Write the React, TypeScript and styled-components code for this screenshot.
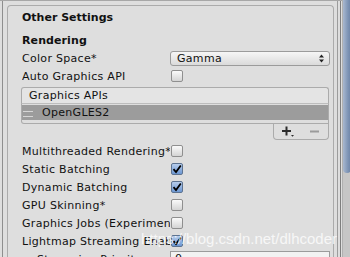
import React from 'react'
import styled, { createGlobalStyle } from 'styled-components'

const GlobalStyle = createGlobalStyle`
  html, body {
    margin: 0;
    padding: 0;
    background: #dedede;
    overflow: hidden;
  }
  body {
    font-family: 'DejaVu Sans', Verdana, sans-serif;
    font-size: 11px;
    letter-spacing: 0.3px;
    color: #111;
  }
`

const Window = styled.div`
  position: relative;
  display: flex;
  width: 350px;
  height: 257px;
  overflow: hidden;
  background: #dedede;
`

const Inspector = styled.div`
  display: flex;
  flex: 1;
  border-top: 1px solid #a7a7a7;
`

const LeftRail = styled.div`
  flex: none;
  width: 4px;
  margin-left: 2px;
  border-left: 1px solid #8e8e8e;
`

const RightRail = styled.div`
  flex: none;
  width: 2px;
  margin: 0 1px 0 3px;
  border-left: 1px solid #9c9c9c;
  border-right: 1px solid #7e7e7e;
`

const Box = styled.div`
  flex: none;
  box-sizing: border-box;
  width: 327px;
  margin-top: 4px;
  padding: 0 3px 0 14px;
  border: 1px solid #ababab;
  border-bottom: none;
  border-radius: 4px 4px 0 0;
`

const Title = styled.div`
  display: flex;
  align-items: center;
  height: 22px;
  font-weight: bold;
  letter-spacing: 0;
`

const Section = styled.div`
  display: flex;
  align-items: center;
  height: 18px;
  margin-top: 3px;
  font-weight: bold;
  letter-spacing: 0.1px;
`

const Row = styled.div<{ $gap?: number }>`
  display: flex;
  align-items: center;
  height: 18px;
  margin-top: ${p => p.$gap || 0}px;
`

const Label = styled.div<{ $indent?: number }>`
  flex: none;
  box-sizing: border-box;
  width: 148px;
  padding-left: ${p => p.$indent || 0}px;
  white-space: nowrap;
  overflow: hidden;
`

const Dropdown = styled.div`
  flex: 1;
  display: flex;
  align-items: center;
  justify-content: space-between;
  height: 15px;
  box-sizing: border-box;
  padding: 0 5px 0 6px;
  border: 1px solid #9b9b9b;
  border-radius: 3px;
  background: linear-gradient(#f6f6f6, #dadada);
`

const TextField = styled.div`
  flex: 1;
  align-self: flex-start;
  margin-top: 1px;
  height: 15px;
  box-sizing: border-box;
  padding-left: 4px;
  border: 1px solid #9b9b9b;
  background: #f2f2f2;
`

const Check = styled.div<{ $on?: boolean }>`
  flex: none;
  display: flex;
  align-items: center;
  justify-content: center;
  width: 12px;
  height: 12px;
  margin-left: 1px;
  box-sizing: border-box;
  border: 1px solid ${p => (p.$on ? '#5d7391' : '#8f8f8f')};
  border-radius: 2px;
  background: ${p =>
    p.$on ? 'linear-gradient(#b7cdec, #6c97d3)' : 'linear-gradient(#fafafa, #d4d4d4)'};
`

const List = styled.div`
  display: flex;
  flex-direction: column;
  margin: 2px 1px 0 -1px;
`

const ListHeader = styled.div`
  display: flex;
  align-items: center;
  height: 15px;
  padding-left: 7px;
  border: 1px solid #ababab;
  border-bottom-color: #bdbdbd;
  border-radius: 3px 3px 0 0;
  background: #e4e4e4;
`

const ListBody = styled.div`
  padding: 1px 0 3px;
  border: 1px solid #ababab;
  border-top: none;
  border-radius: 0 0 0 3px;
`

const ListItem = styled.div<{ $selected?: boolean }>`
  display: flex;
  align-items: center;
  gap: 9px;
  height: 15px;
  padding-left: 1px;
  background: ${p => (p.$selected ? '#9c9c9c' : 'transparent')};
`

const Handle = styled.div`
  width: 10px;
  height: 4px;
  border-top: 1px solid #d6d6d6;
  border-bottom: 1px solid #d6d6d6;
  margin-top: 2px;
`

const Footer = styled.div`
  display: flex;
  align-self: flex-end;
  width: 56px;
  height: 16px;
  box-sizing: border-box;
  border: 1px solid #ababab;
  border-top: none;
  border-radius: 0 0 4px 4px;
`

const FooterButton = styled.div`
  flex: 1;
  display: flex;
  align-items: center;
  justify-content: center;
`

const Scrollbar = styled.div`
  flex: none;
  display: flex;
  flex-direction: column;
  width: 8px;
  background: #c6c6c6;
  border-left: 1px solid #b0b0b0;
`

const Thumb = styled.div`
  height: 173px;
  border-radius: 0 0 4px 4px;
  background: linear-gradient(90deg, #a9b8cf, #7f95b6 60%, #6c83a6);
`

const Watermark = styled.div`
  position: absolute;
  right: 13px;
  top: 230px;
  font-family: 'Liberation Sans', Arial, sans-serif;
  font-size: 15px;
  letter-spacing: 0;
  color: rgba(255, 255, 255, 0.78);
  white-space: nowrap;
  pointer-events: none;
`

const CheckMark = () => (
  <svg width="10" height="10" viewBox="0 0 10 10">
    <path d="M1.5 5.2 L4 8 L8.8 1.5" fill="none" stroke="#000" strokeWidth="1.8" />
  </svg>
)

const Arrows = () => (
  <svg width="5" height="9" viewBox="0 0 5 9">
    <path d="M2.5 0.5 L5 3.5 H0 Z M2.5 8.5 L5 5.5 H0 Z" fill="#222" />
  </svg>
)

const Plus = () => (
  <svg width="12" height="11" viewBox="0 0 12 11">
    <path d="M4.5 0.5 V9.5 M0 5 H9" stroke="#2c2c2c" strokeWidth="2" />
    <path d="M9 9 H12 L10.5 10.8 Z" fill="#2c2c2c" />
  </svg>
)

const Minus = () => (
  <svg width="9" height="3" viewBox="0 0 9 3">
    <path d="M0 1.5 H9" stroke="#9b9b9b" strokeWidth="2" />
  </svg>
)

const checks: [string, boolean][] = [
  ['Multithreaded Rendering*', false],
  ['Static Batching', true],
  ['Dynamic Batching', true],
  ['GPU Skinning*', false],
  ['Graphics Jobs (Experimental)*', false],
  ['Lightmap Streaming Enabled', true],
]

export default function App() {
  return (
    <Window>
      <GlobalStyle />
      <Inspector>
        <LeftRail />
        <Box>
          <Title>Other Settings</Title>
          <Section>Rendering</Section>
          <Row>
            <Label>Color Space*</Label>
            <Dropdown>
              <span>Gamma</span>
              <Arrows />
            </Dropdown>
          </Row>
          <Row>
            <Label>Auto Graphics API</Label>
            <Check />
          </Row>
          <List>
            <ListHeader>Graphics APIs</ListHeader>
            <ListBody>
              <ListItem $selected>
                <Handle />
                <span>OpenGLES2</span>
              </ListItem>
            </ListBody>
            <Footer>
              <FooterButton><Plus /></FooterButton>
              <FooterButton><Minus /></FooterButton>
            </Footer>
          </List>
          {checks.map(([label, on], i) => (
            <Row key={label} $gap={i === 0 ? 2 : 0}>
              <Label>{label}</Label>
              <Check $on={on}>{on && <CheckMark />}</Check>
            </Row>
          ))}
          <Row>
            <Label $indent={15}>Streaming Priority</Label>
            <TextField>0</TextField>
          </Row>
        </Box>
        <RightRail />
      </Inspector>
      <Scrollbar>
        <Thumb />
      </Scrollbar>
      <Watermark>https://blog.csdn.net/dlhcoder</Watermark>
    </Window>
  )
}
